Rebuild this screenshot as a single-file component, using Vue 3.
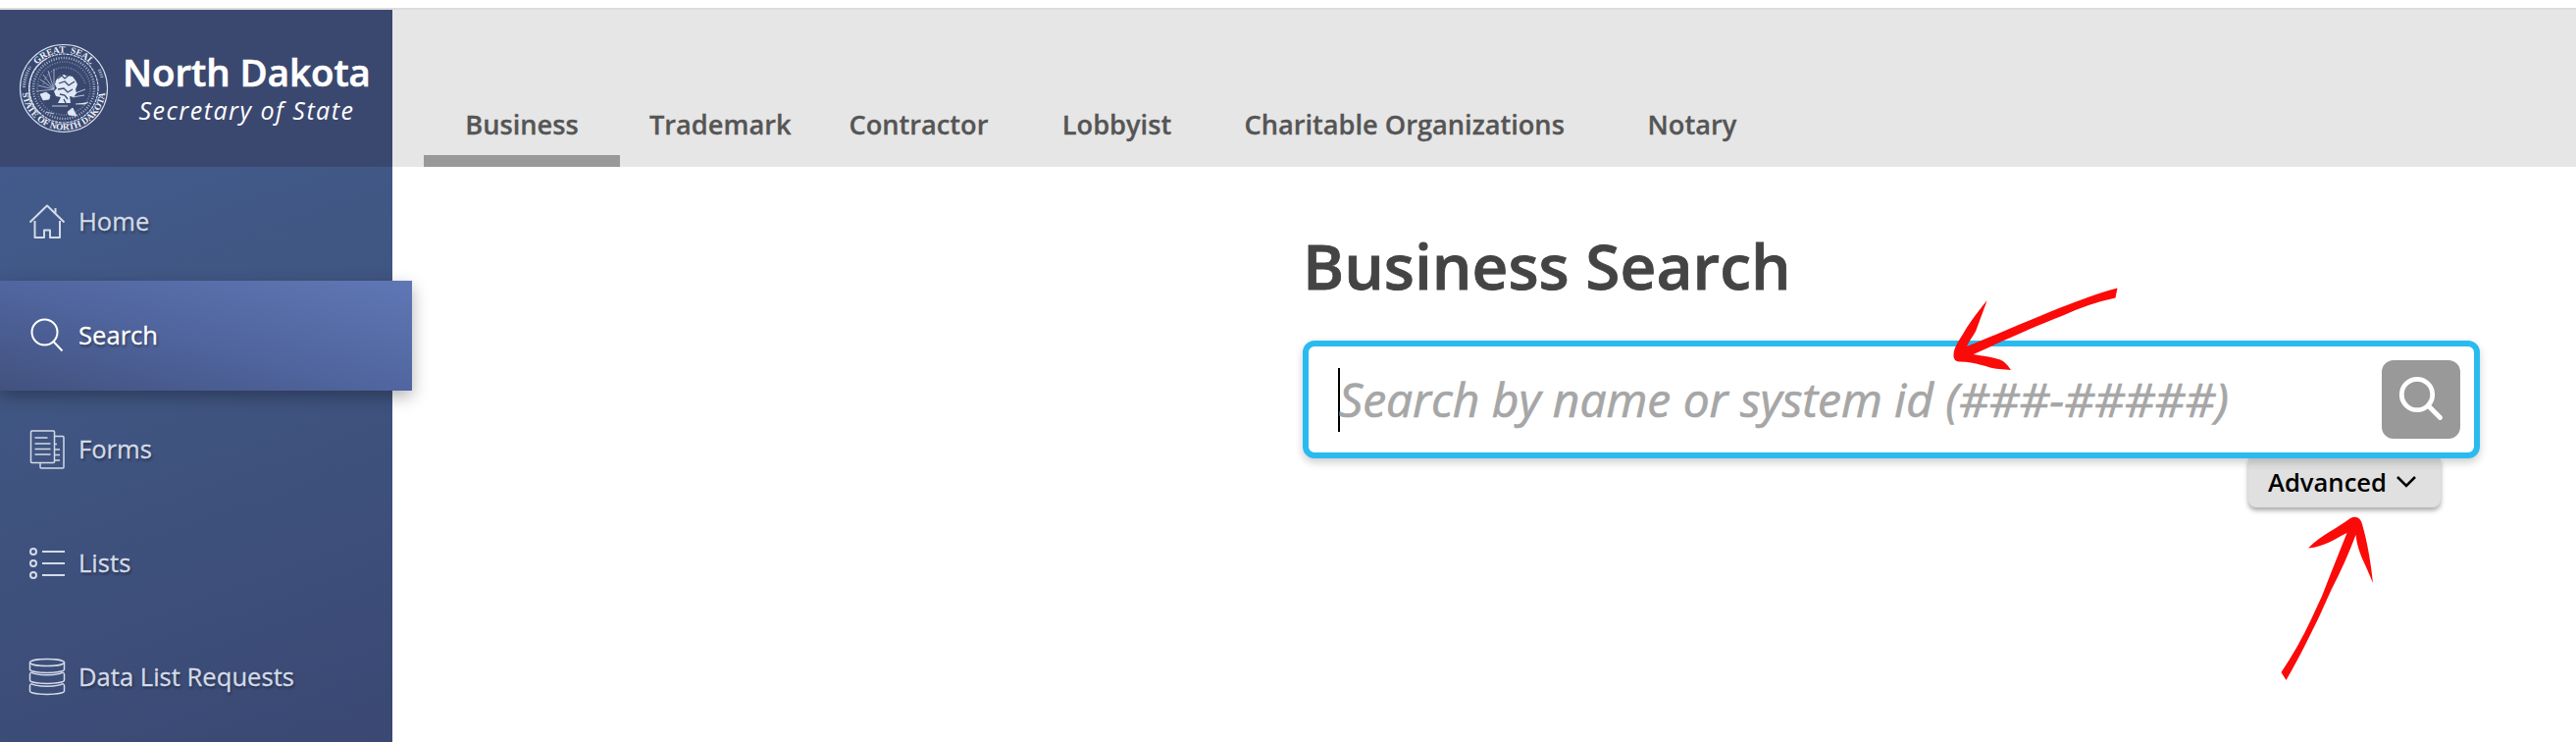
<script setup>
import { ref } from 'vue'

// Sidebar entries, icon is the key of the svg drawn in the template
const navItems = [
  { label: 'Home', icon: 'home' },
  { label: 'Search', icon: 'search' },
  { label: 'Forms', icon: 'forms' },
  { label: 'Lists', icon: 'lists' },
  { label: 'Data List Requests', icon: 'data' },
]

const tabs = [
  'Business',
  'Trademark',
  'Contractor',
  'Lobbyist',
  'Charitable Organizations',
  'Notary',
]

const activeNav = ref('Search')
const activeTab = ref('Business')
</script>

<template>
  <div class="page">
    <div class="layout">
      <aside class="sidebar">
        <div class="brand">
          <svg class="seal" viewBox="0 0 92 92">
            <defs>
              <path id="seal-top" d="M 9.5 46 A 36.5 36.5 0 0 1 82.5 46" />
              <path id="seal-bottom" d="M 3.5 46 A 42.5 42.5 0 0 0 88.5 46" />
            </defs>
            <circle cx="46" cy="46" r="44.5" class="ring" />
            <circle cx="46" cy="46" r="35" class="ring dashed" />
            <path class="ring" d="M22 72A35 35 0 0 1 28 16" />
            <circle cx="46" cy="46" r="31" class="ring dots" />
            <circle cx="46" cy="46" r="27" class="ring dots faint" />
            <path class="ring dots faint" d="M25 42A22 22 0 0 1 68 42" />
            <text class="seal-text">
              <textPath href="#seal-top" startOffset="50%" text-anchor="middle">GREAT&#160; SEAL</textPath>
            </text>
            <text class="seal-text">
              <textPath href="#seal-bottom" startOffset="50%" text-anchor="middle">STATE OF NORTH DAKOTA</textPath>
            </text>
            <path class="side-marks" d="M5.5 45A40.500 40.500 0 0 1 12 24M82 27A40.500 40.500 0 0 1 85 35" />
            <path class="rays" d="M36 47L20 43M36 47L22 37M36 47L25 32M36 47L30 28M36 47L36 26M36 47L18 49" />
            <path
              class="tree"
              d="M40 61l3-6-5-1-2-5 3-3-2-4 1-4 3-4 5-2 4 1 5 1 3 4 2 4-2 5 1 4-3 4-4-1 1 7z"
            />
            <path class="bark" d="M40 36l4-3 3 3 5-4M41 41l6-2 4 4 6-4M40 47l6-1 4 4 5-3M42 52l5 1 3 4M46 30l3 3M46 57l2 4" />
            <path class="land" d="M22 52l6-2 4 3-1 4-6 1zM34 64h16M55 55l12-2M58 62h10l3-2M55 52l13-5M28 70l8 2M50 70l5-4 4 8-8-1z" />
          </svg>
          <div class="brand-text">
            <div class="brand-name">North Dakota</div>
            <div class="brand-sub">Secretary of State</div>
          </div>
        </div>

        <nav class="side-nav">
          <a
            v-for="item in navItems"
            :key="item.label"
            class="nav-item"
            :class="{ active: item.label === activeNav }"
            @click="activeNav = item.label"
          >
            <svg class="nav-icon" viewBox="0 0 40 40">
              <g v-if="item.icon === 'home'">
                <path d="M2.500 20.500L20 3.500L37.500 20.500M28.500 11V6" />
                <path d="M7.500 19v17h9.500v-7.500h6V36H33V19" />
              </g>
              <g v-else-if="item.icon === 'search'">
                <circle cx="17.500" cy="16.500" r="13" />
                <path d="M26.500 26L35.500 35.500" />
              </g>
              <g v-else-if="item.icon === 'forms'" class="thin">
                <rect x="3.500" y="1" width="24" height="32.500" rx="1" />
                <path d="M28 6.500h8q1 0 1 1V38q0 1-1 1H14q-1 0-1-1v-4" />
                <path d="M7.500 8h13M7.500 14h16M7.500 19.500h16M7.500 25h16M28 14.500h2M28 20h5M28 25.500h5M28 31h5" />
              </g>
              <g v-else-if="item.icon === 'lists'">
                <circle cx="6" cy="8" r="3" />
                <circle cx="6" cy="20" r="3" />
                <circle cx="6" cy="32" r="3" />
                <path d="M15 8h23M15 20h23M15 32h23" />
              </g>
              <g v-else class="thin">
                <ellipse cx="20" cy="5" rx="17.500" ry="3.500" />
                <path d="M2.500 5v7c0 4.500 35 4.500 35 0V5" />
                <path d="M4 15q-1.500 1-1.500 2v6c0 4.500 35 4.500 35 0v-6q0-1-1.500-2" />
                <path d="M4 26.500q-1.500 1-1.500 2V34c0 4.500 35 4.500 35 0v-5.500q0-1-1.500-2" />
                <path d="M4 26.500c4 3.500 28 3.500 32 0M4 15c4 3.500 28 3.500 32 0" />
              </g>
            </svg>
            <span class="nav-label">{{ item.label }}</span>
          </a>
        </nav>
      </aside>

      <div class="content">
        <header class="tabs">
          <a
            v-for="tab in tabs"
            :key="tab"
            class="tab"
            :class="{ active: tab === activeTab }"
            @click="activeTab = tab"
          >
            <span>{{ tab }}</span>
          </a>
        </header>

        <main class="search">
          <h1 class="title">Business Search</h1>
          <div class="search-box">
            <span class="caret"></span>
            <span class="placeholder">Search by name or system id (###-#####)</span>
            <button class="search-button" aria-label="Search">
              <svg viewBox="0 0 48 48">
                <circle cx="20" cy="19" r="15.700" />
                <path d="M31.500 30.500L43.500 42.500" />
              </svg>
            </button>
          </div>
          <button class="advanced">
            <span>Advanced</span>
            <svg viewBox="0 0 22 14">
              <path d="M2 2l9 9 9-9" />
            </svg>
          </button>
        </main>
      </div>
    </div>

    <!-- hand drawn pointers over the search field and the advanced toggle -->
    <svg class="arrows" viewBox="0 0 2626 756">
      <path
        d="M2158.500 293.500C2118 304 2062 330 2005 353C2009 344 2013 341 2015 335L2025.700 306C2016 318 2009 327 2003 337C1998 346 1991 354 1991.500 363Q1992 368 1997 368.500C2018 369 2029 376 2038 376L2050 377Q2045 369 2039 366.500C2030 363 2020 363 2011.700 361C2045 346 2075 332 2103 321.500Q2130 309 2156.500 303.500Z"
      />
      <path
        d="M2325.500 685C2337 668 2347 650 2356.500 630Q2368 607 2376.500 583L2392.500 543C2380 549 2370 557 2353 558.500C2367 544 2382 539 2396 528Q2405 524 2408 534C2414 555 2417 575 2419 594C2411 573 2404 565 2401.500 545Q2391 573 2376.500 601Q2364 630 2350 657Q2342 673 2330.500 693Z"
      />
    </svg>
  </div>
</template>

<style>
body {
  background: #fff;
}
</style>

<style scoped>
.page {
  position: relative;
  width: 2626px;
  height: 756px;
  padding-top: 8px;
  box-sizing: border-box;
  overflow: hidden;
  background: #fff;
  font-family: 'Open Sans', 'Noto Sans', sans-serif;
}

.layout {
  display: flex;
  height: 748px;
  box-sizing: border-box;
  border-top: 2px solid #dcdcdc;
}

.sidebar {
  display: flex;
  flex-direction: column;
  width: 400px;
  flex-shrink: 0;
  background: linear-gradient(160deg, #425b8c 18%, #405682 45%, #3a4873 100%);
}

.brand {
  display: flex;
  align-items: center;
  height: 160px;
  padding-left: 19px;
  box-sizing: border-box;
  background: #3a486f;
}

.seal {
  width: 92px;
  height: 92px;
}

.ring {
  fill: none;
  stroke: #d8e2f2;
  stroke-width: 1.1;
}

.ring.dashed {
  stroke-dasharray: 3 0.8;
}

.ring.dots {
  stroke: #a9b6d0;
  stroke-width: 2.5;
  stroke-dasharray: 1 1.6;
}

.ring.faint {
  stroke-width: 1.6;
  opacity: 0.6;
}

.seal-text {
  font-family: 'Liberation Serif', serif;
  font-weight: 700;
  font-size: 9.4px;
  fill: #eaf1fb;
}

.side-marks {
  fill: none;
  stroke: #a9b6d0;
  stroke-width: 3;
  stroke-dasharray: 1.2 1.2;
}

.rays,
.bark,
.land {
  fill: none;
  stroke: #b5c1d9;
  stroke-width: 0.8;
}

.tree {
  fill: #dfe8f5;
}

.bark {
  stroke: #3a486f;
  stroke-width: 1.3;
}

.land {
  fill: #dfe8f5;
  stroke: #dfe8f5;
}

.brand-text {
  display: flex;
  flex-direction: column;
  align-items: center;
  margin-left: 14px;
  color: #fff;
}

.brand-name {
  font-size: 38.4px;
  font-weight: 600;
  line-height: 44px;
  -webkit-text-stroke: 0.7px #fff;
}

.brand-sub {
  font-size: 25px;
  font-style: italic;
  line-height: 34px;
  letter-spacing: 1.5px;
}

.side-nav {
  display: flex;
  flex-direction: column;
  gap: 4px;
}

.nav-item {
  display: flex;
  align-items: center;
  gap: 12px;
  height: 112px;
  padding-left: 28px;
  box-sizing: border-box;
  color: #d3dae8;
  font-size: 25.6px;
  text-shadow: 1px 2px 3px rgba(0, 0, 0, 0.45);
}

.nav-item.active {
  width: 420px;
  color: #fff;
  background: linear-gradient(15deg, #42527f 0%, #5166a0 50%, #5f77b5 100%);
  box-shadow: 0 6px 16px rgba(0, 0, 0, 0.3);
}

.nav-label {
  padding-bottom: 2px;
  -webkit-text-stroke: 0.3px currentColor;
}

.nav-icon {
  width: 40px;
  height: 40px;
  fill: none;
  stroke: currentColor;
  stroke-width: 2;
  stroke-linejoin: round;
}

.thin {
  stroke-width: 1.5;
}

.content {
  flex: 1;
}

.tabs {
  display: flex;
  gap: 2px;
  height: 160px;
  padding-left: 32px;
  box-sizing: border-box;
  background: #e6e6e6;
}

.tab {
  display: flex;
  flex-direction: column;
  justify-content: flex-end;
  align-items: center;
  min-width: 200px;
  padding: 0 28px 13px;
  box-sizing: border-box;
  border-bottom: 12px solid transparent;
  color: #555;
  font-size: 27.2px;
  font-weight: 600;
  line-height: 36px;
  -webkit-text-stroke: 0.3px #555;
}

.tab.active {
  border-bottom-color: #999;
}

.search {
  display: flex;
  flex-direction: column;
  width: 1200px;
  margin-left: 928px;
}

.title {
  margin: 57px 0 32px;
  color: #444;
  font-size: 64px;
  font-weight: 600;
  line-height: 88px;
  -webkit-text-stroke: 0.8px #444;
}

.search-box {
  display: flex;
  align-items: center;
  height: 120px;
  padding: 0 14px 0 30px;
  box-sizing: border-box;
  border: 6px solid #29bbf0;
  border-radius: 12px;
  background: #fff;
  box-shadow: 0 4px 8px rgba(0, 0, 0, 0.2);
  z-index: 1;
}

.caret {
  width: 2px;
  height: 65px;
  background: #000;
}

.placeholder {
  flex: 1;
  margin-left: -1px;
  padding-bottom: 2px;
  color: #a6a6a6;
  font-size: 48px;
  font-style: italic;
  letter-spacing: -0.05px;
  white-space: nowrap;
  -webkit-text-stroke: 0.7px #a6a6a6;
}

.search-button {
  display: flex;
  align-items: center;
  justify-content: center;
  width: 80px;
  height: 80px;
  padding: 0;
  border: none;
  border-radius: 12px;
  background: #999;
}

.search-button svg {
  width: 48px;
  height: 48px;
  fill: none;
  stroke: #fff;
  stroke-width: 4.8;
  stroke-linecap: round;
}

.advanced {
  display: flex;
  align-items: center;
  align-self: flex-end;
  justify-content: space-between;
  width: 196px;
  height: 50px;
  margin-right: 40px;
  padding: 0 24px 2px 20px;
  border: none;
  border-radius: 0 0 8px 8px;
  background: #e0e0e0;
  box-shadow: 0 3px 5px rgba(0, 0, 0, 0.35);
  color: #000;
  font-family: inherit;
  font-size: 25.6px;
  font-weight: 600;
}

.advanced svg {
  width: 22px;
  height: 14px;
  fill: none;
  stroke: #000;
  stroke-width: 2.6;
}

.arrows {
  position: absolute;
  top: 0;
  left: 0;
  width: 2626px;
  height: 756px;
  fill: #fb0a0a;
  pointer-events: none;
  z-index: 2;
}
</style>
